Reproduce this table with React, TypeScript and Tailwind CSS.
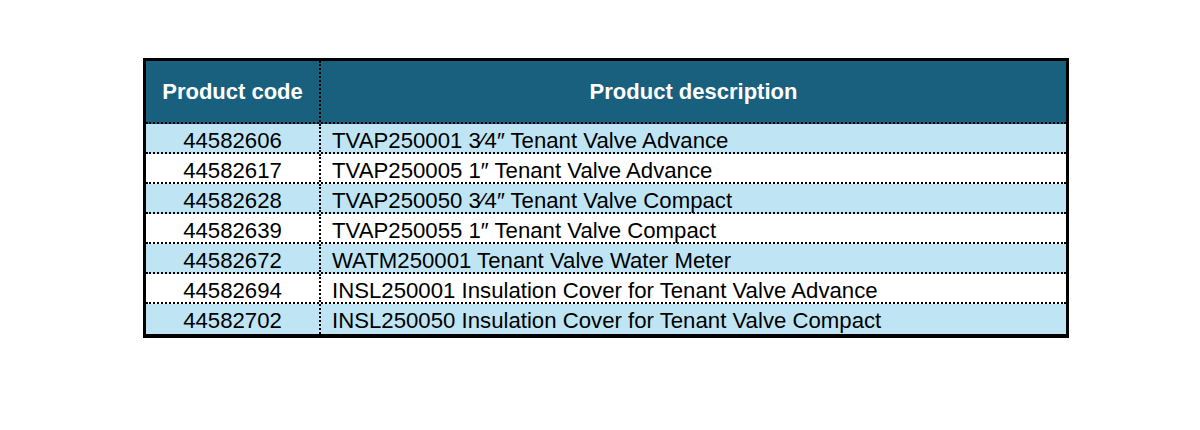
import React from 'react';

const ROWS = [
    { code: '44582606', desc: 'TVAP250001 3\u20444\u2033 Tenant Valve Advance' },
    { code: '44582617', desc: 'TVAP250005 1\u2033 Tenant Valve Advance' },
    { code: '44582628', desc: 'TVAP250050 3\u20444\u2033 Tenant Valve Compact' },
    { code: '44582639', desc: 'TVAP250055 1\u2033 Tenant Valve Compact' },
    { code: '44582672', desc: 'WATM250001 Tenant Valve Water Meter' },
    { code: '44582694', desc: 'INSL250001 Insulation Cover for Tenant Valve Advance' },
    { code: '44582702', desc: 'INSL250050 Insulation Cover for Tenant Valve Compact' },
];

export default function App() {
    return (
        <div className="w-[1200px] h-[430px] bg-white pt-[58px] pl-[143px] font-['Liberation_Sans',Arial,sans-serif]">
            <div className="w-[926px] border-[3px] border-b-[4px] border-black bg-white">
                {/* Header */}
                <div className="flex h-[63px] bg-[#195f7e] text-white font-bold text-[22px] border-b-2 border-dotted border-black">
                    <div className="w-[175px] flex items-center justify-center border-r-2 border-dotted border-black">
                        Product code
                    </div>
                    <div className="flex-1 flex items-center justify-center">
                        Product description
                    </div>
                </div>

                {/* Rows */}
                {ROWS.map((row, idx) => (
                    <div
                        key={row.code}
                        className={`flex h-[30px] text-[22.2px] text-black leading-none ${idx % 2 === 0 ? 'bg-[#bfe5f5]' : 'bg-white'} ${idx < ROWS.length - 1 ? 'border-b-2 border-dotted border-black' : ''}`}
                    >
                        <div className="w-[175px] flex justify-center pt-[6px] border-r-2 border-dotted border-black">
                            {row.code}
                        </div>
                        <div className="flex-1 flex pt-[6px] pl-[11px]">
                            {row.desc}
                        </div>
                    </div>
                ))}
            </div>
        </div>
    );
}
